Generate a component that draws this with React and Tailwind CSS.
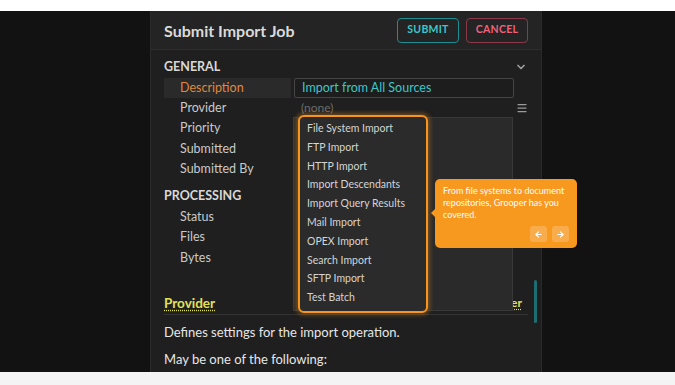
import { ArrowLeft, ArrowRight, ChevronDown, Menu } from "lucide-react";

const general = ["Provider", "Priority", "Submitted", "Submitted By"];
const processing = ["Status", "Files", "Bytes"];
const providers = [
  "File System Import",
  "FTP Import",
  "HTTP Import",
  "Import Descendants",
  "Import Query Results",
  "Mail Import",
  "OPEX Import",
  "Search Import",
  "SFTP Import",
  "Test Batch",
];

function Row({ label, children }) {
  return (
    <div className="flex h-[20.5px] items-center">
      <div className="w-[130px] pl-[16px] text-[12.5px] text-[#c9c9c9]">{label}</div>
      <div className="flex-1 text-[12px]">{children}</div>
    </div>
  );
}

export default function App() {
  return (
    <div
      className="relative h-[385px] w-[675px] overflow-hidden bg-white"
      style={{ fontFamily: 'Lato, "Open Sans", sans-serif' }}
    >
      <div className="h-[11px] bg-white" />
      <div className="flex h-[361px] bg-[#121212]">
        {/* Dialog */}
        <div className="relative ml-[150px] flex w-[392px] flex-col border-x border-[#2a2a2a] bg-[#1f1f1f]">
          {/* Header */}
          <div className="flex h-[39px] items-center justify-between border-b border-[#2e2e2e] bg-[#242424] pl-[13px] pr-[13px]">
            <div className="pt-[2px] text-[16px] font-bold text-[#dadada]">Submit Import Job</div>
            <div className="flex gap-[7px]">
              <button className="flex h-[25px] w-[62px] items-center justify-center rounded-[4px] border border-[#1b8f92] text-[10.5px] font-bold tracking-wide text-[#3cc6c9]">
                SUBMIT
              </button>
              <button className="flex h-[25px] w-[62px] items-center justify-center rounded-[4px] border border-[#8c3a4b] text-[10.5px] font-bold tracking-wide text-[#f0607a]">
                CANCEL
              </button>
            </div>
          </div>

          {/* Properties */}
          <div className="px-[13px] pt-[8px]">
            <div className="flex h-[18px] items-center justify-between">
              <div className="text-[12.5px] font-bold text-[#d8d8d8]">GENERAL</div>
              <ChevronDown size={12} strokeWidth={3.5} className="mr-[1px] text-[#9a9a9a]" />
            </div>
            <div className="mt-[2px] flex h-[20px] items-center">
              <div className="flex h-[20px] w-[127px] items-center bg-[#2a2a2a] pl-[16px] text-[12.5px] text-[#e0873a]">
                Description
              </div>
              <div className="ml-[3px] flex h-[20px] w-[220px] items-center rounded-[2px] border border-[#454545] bg-[#1d1d1d] pl-[7px] text-[12.5px] text-[#3cc6c9]">
                Import from All Sources
              </div>
            </div>
            <div className="flex">
              <div className="w-[350px]">
                {general.map((g) => (
                  <Row key={g} label={g}>
                    {g === "Provider" ? <span className="pl-[7px] text-[#6c6c6c]">(none)</span> : null}
                  </Row>
                ))}
              </div>
              <div className="pt-[4px]">
                <Menu size={12} strokeWidth={2.5} className="ml-[3px] text-[#9a9a9a]" />
              </div>
            </div>
            <div className="mt-[6px] flex h-[21px] items-center text-[12.5px] font-bold text-[#d8d8d8]">PROCESSING</div>
            {processing.map((p) => (
              <Row key={p} label={p} />
            ))}
          </div>

          {/* Help */}
          <div className="mt-[24px] px-[13px]">
            <div className="flex h-[22px] items-center justify-between border-b border-[#333] pr-[6px]">
              <span className="text-[13.5px] font-bold text-[#e2e25a] underline decoration-dotted underline-offset-2">
                Provider
              </span>
              <span className="text-[12px] font-bold text-[#e2e25a] underline decoration-dotted underline-offset-2">
                Provider
              </span>
            </div>
            <div className="mt-[8px] text-[13px] text-[#e6e6e6]">Defines settings for the import operation.</div>
            <div className="mt-[8px] text-[13px] text-[#e6e6e6]">May be one of the following:</div>
          </div>

          {/* scrollbar */}
          <div className="absolute right-[4px] top-[269px] h-[43px] w-[3px] rounded-sm bg-[#1e6d72]" />
        </div>
      </div>
      <div className="h-[13px] bg-[#f4f4f4]" />

      {/* Provider listbox */}
      <div className="absolute left-[293px] top-[117px] h-[194px] w-[220px] border border-[#383838] bg-[#2a2a2a]" />

      {/* Highlighted dropdown */}
      <div className="absolute left-[298px] top-[115px] w-[130px] rounded-[6px] border-2 border-[#f7941d] bg-[#2b2b2b] pb-[4px] pl-[7px] pt-[2px] shadow-[0_0_4px_2px_rgba(247,148,29,0.35)]">
        {providers.map((p) => (
          <div key={p} className="h-[18.8px] text-[10.5px] leading-[18.8px] text-[#d4d4d4]">
            {p}
          </div>
        ))}
      </div>

      {/* Tour tooltip */}
      <div className="absolute left-[435px] top-[179px] h-[69px] w-[142px] rounded-[5px] bg-[#f7981f] px-[8px] pt-[6px]">
        <div className="absolute left-[-4px] top-[30px] h-0 w-0 border-y-[4px] border-r-[4px] border-y-transparent border-r-[#f7981f]" />
        <div className="text-[9px] leading-[12px] text-white">
          From file systems to document repositories, Grooper has you covered.
        </div>
        <div className="absolute bottom-[6px] right-[8px] flex gap-[5px]">
          <div className="flex h-[16px] w-[17px] items-center justify-center rounded-[3px] bg-white/20">
            <ArrowLeft size={9} strokeWidth={3} className="text-white" />
          </div>
          <div className="flex h-[16px] w-[17px] items-center justify-center rounded-[3px] bg-white/20">
            <ArrowRight size={9} strokeWidth={3} className="text-white" />
          </div>
        </div>
      </div>
    </div>
  );
}
